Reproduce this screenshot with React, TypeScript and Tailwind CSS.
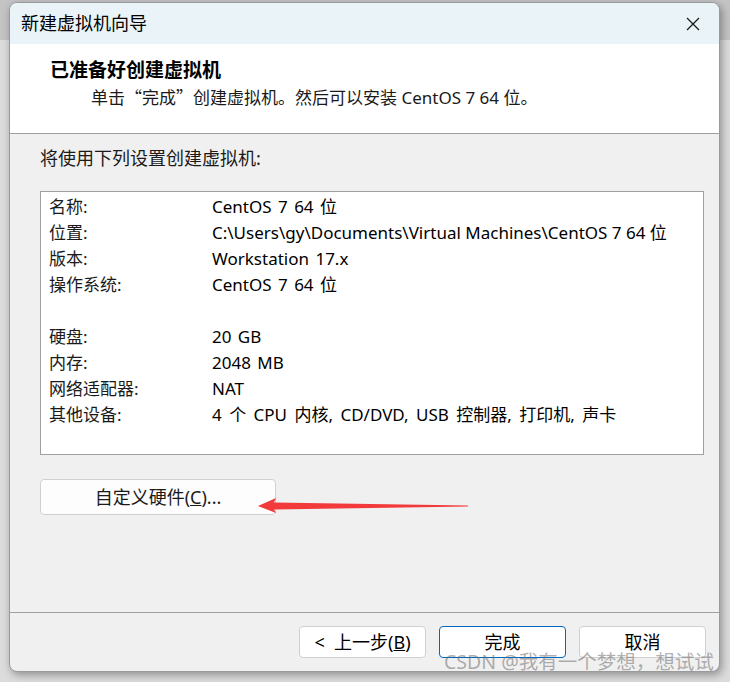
import React from "react";

const rows: [string, string][] = [
  ["名称:", "CentOS 7 64 位"],
  ["位置:", "C:\\Users\\gy\\Documents\\Virtual Machines\\CentOS 7 64 位"],
  ["版本:", "Workstation 17.x"],
  ["操作系统:", "CentOS 7 64 位"],
  ["", ""],
  ["硬盘:", "20 GB"],
  ["内存:", "2048 MB"],
  ["网络适配器:", "NAT"],
  ["其他设备:", "4 个 CPU 内核, CD/DVD, USB 控制器, 打印机, 声卡"],
];

const font = "font-['Segoe_UI','Noto_Sans','Noto_Sans_CJK_SC',sans-serif]";

const Btn = ({ children, primary }: { children: React.ReactNode; primary?: boolean }) => (
  <button
    className={
      "h-[32px] w-[127px] rounded-[4px] bg-white text-[18px] leading-[24px] text-black " +
      (primary ? "border border-[#0067c0]" : "border border-[#d0d0d0]")
    }>
    {children}
  </button>
);

export default function App() {
  return (
    <div className={"relative h-[682px] w-[730px] overflow-hidden bg-[#dcdcdc] " + font}>
      <div className="absolute inset-x-0 top-0 h-[40px] bg-[#c4c4c4]" />
      <div className="relative ml-[9px] mt-[2px] flex h-[670px] w-[711px] flex-col overflow-hidden rounded-[8px] border border-[#9a9a9a] bg-[#f0f0f0] shadow-[2px_3px_8px_rgba(0,0,0,0.35)]">
        {/* title bar */}
        <div className="flex h-[41px] shrink-0 items-center justify-between bg-[#eaf4f8] pl-[11px] pr-[18px]">
          <span className="text-[18px] text-black">新建虚拟机向导</span>
          <svg width="16" height="16" viewBox="0 0 16 16">
            <path d="M2 2L14 14M14 2L2 14" stroke="#1a1a1a" strokeWidth="1.3" />
          </svg>
        </div>

        {/* header */}
        <div className="h-[90px] shrink-0 border-b border-[#a0a0a0] bg-white pl-[40px] pt-[12px]">
          <div className="text-[19px] font-bold leading-[26px] text-black font-['Noto_Sans_CJK_SC',serif]">
            已准备好创建虚拟机
          </div>
          <div className="mt-[2px] pl-[41px] text-[17px] leading-[26px] text-[#1a1a1a]">
            单击<span className="font-['Noto_Sans_CJK_SC',sans-serif]">“完成”</span>创建虚拟机。然后可以安装 CentOS 7 64 位。
          </div>
        </div>

        {/* body */}
        <div className="flex-1 px-[30px] pt-[12px]">
          <div className="text-[18px] leading-[24px] text-[#1a1a1a]">将使用下列设置创建虚拟机:</div>
          <div className="mt-[21px] h-[264px] w-[664px] border border-[#a0a0a0] bg-white pl-[8px] pt-[2px]">
            {rows.map(([k, v], i) => (
              <div key={i} className="flex h-[26px] items-center text-[17px] text-black">
                <span className="w-[163px] shrink-0 text-[#1a1a1a]">{k}</span>
                <span
                  className={
                    i === 1
                      ? "whitespace-nowrap"
                      : i === 8
                        ? "whitespace-nowrap [word-spacing:3px]"
                        : "whitespace-nowrap [word-spacing:2px]"
                  }>
                  {v}
                </span>
              </div>
            ))}
          </div>
          <button className="mt-[24px] h-[36px] w-[236px] rounded-[4px] border border-[#d0d0d0] bg-[#fdfdfd] text-[18px] text-[#1a1a1a]">
            自定义硬件(<span className="underline">C</span>)...
          </button>
        </div>

        {/* footer */}
        <div className="flex h-[59px] shrink-0 items-start justify-end gap-[13px] border-t border-[#a0a0a0] pr-[13px] pt-[13px]">
          <Btn>
            &lt;&nbsp; 上一步(<span className="underline">B</span>)
          </Btn>
          <Btn primary>完成</Btn>
          <Btn>取消</Btn>
        </div>
      </div>

      {/* red arrow annotation */}
      <svg className="absolute left-[250px] top-[490px]" width="230" height="30" viewBox="0 0 230 30">
        <polygon points="8,16 26,8 24,12.5 218,15.5 218,16.5 24,19.5 26,23" fill="#f23a3a" />
      </svg>

      {/* watermark */}
      <div className="absolute left-[444px] top-[649px] whitespace-nowrap text-[19.5px] leading-[26px] text-[rgba(110,110,110,0.55)]">
        CSDN @我有一个梦想，想试试
      </div>
    </div>
  );
}
